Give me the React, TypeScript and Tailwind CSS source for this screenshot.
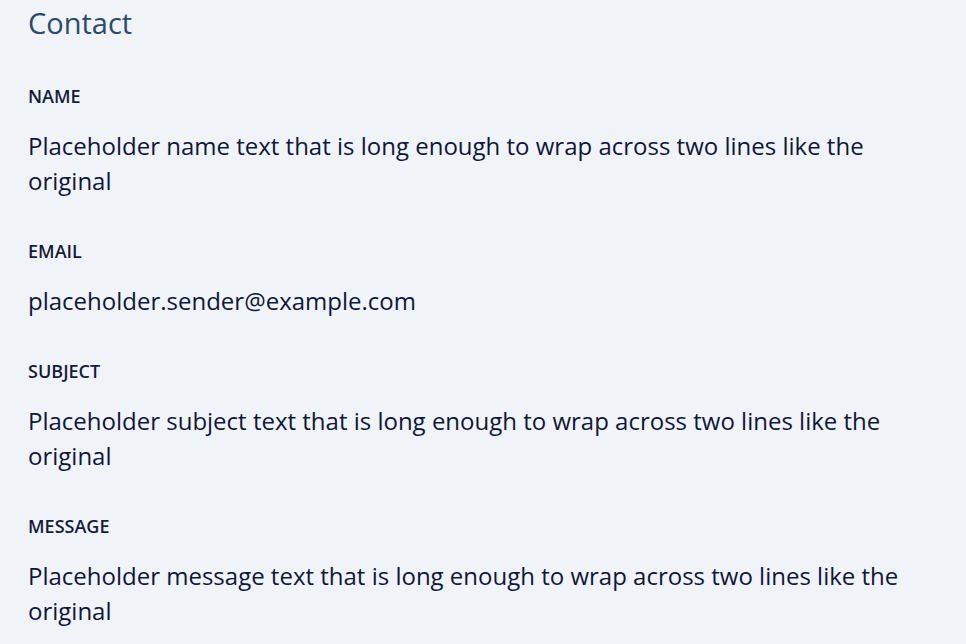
import React from "react";

type Field = { label: string; value: string };

const fields: Field[] = [
  {
    label: "NAME",
    value:
      "Placeholder name text that is long enough to wrap across two lines like the original",
  },
  { label: "EMAIL", value: "placeholder.sender@example.com" },
  {
    label: "SUBJECT",
    value:
      "Placeholder subject text that is long enough to wrap across two lines like the original",
  },
  {
    label: "MESSAGE",
    value:
      "Placeholder message text that is long enough to wrap across two lines like the original",
  },
];

export default function App() {
  return (
    <div
      className="min-h-[644px] w-[966px] bg-[#f0f4f8] pl-[28px] pr-[40px] pt-[4px]"
      style={{ fontFamily: "'Open Sans', 'Noto Sans', sans-serif" }}
    >
      <h1 className="text-[29px] leading-[38px] text-[#2c4a69]">Contact</h1>
      <div className="mt-[43px] flex flex-col gap-[42px]">
        {fields.map((f) => (
          <div key={f.label} className="flex flex-col">
            <p className="text-[18px] leading-[22px] font-semibold text-[#151c38]">
              {f.label}
            </p>
            <p className="mt-[21px] max-w-[900px] text-[24px] leading-[35px] text-[#10173a]">
              {f.value}
            </p>
          </div>
        ))}
      </div>
    </div>
  );
}
